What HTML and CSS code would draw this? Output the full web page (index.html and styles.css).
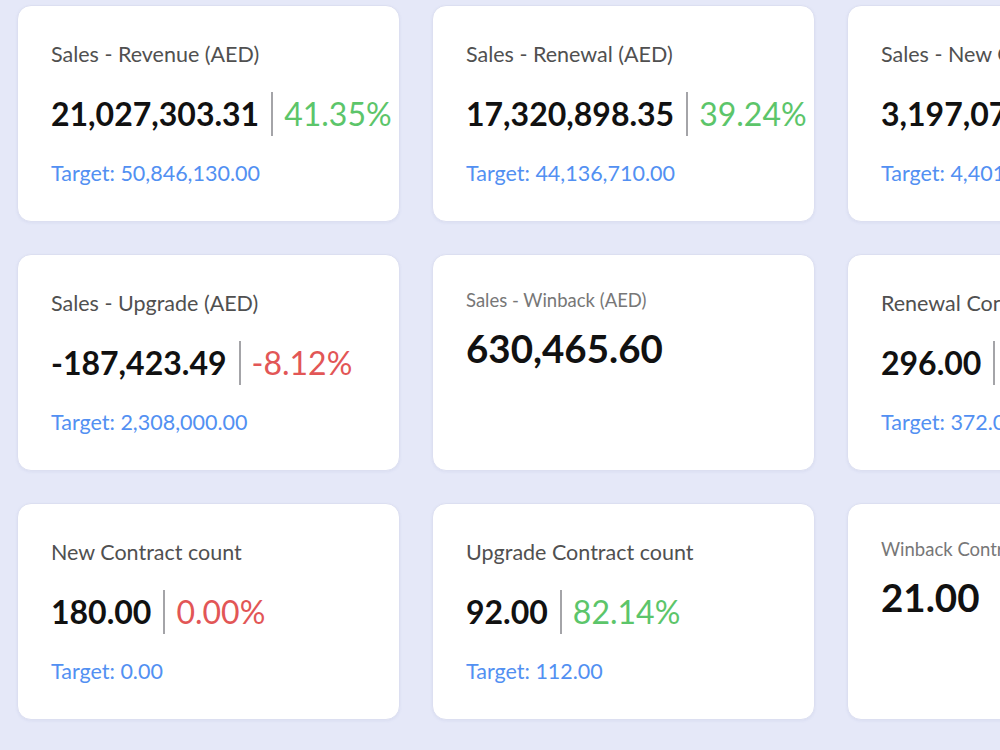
FILE: index.html
```html
<!DOCTYPE html>
<html lang="en">
<head>
    <meta charset="UTF-8">
    <meta name="viewport" content="width=device-width, initial-scale=1.0">
    <title>Sales KPIs</title>
    <link rel="stylesheet" href="styles.css">
</head>
<body>
    <div class="kpi-grid">
        <!-- Row 1: sales amounts -->
        <div class="kpi-card">
            <div class="kpi-title">Sales - Revenue (AED)</div>
            <div class="kpi-row">
                <span class="kpi-value">21,027,303.31</span>
                <span class="kpi-divider"></span>
                <span class="kpi-change up">41.35%</span>
            </div>
            <div class="kpi-target">Target: 50,846,130.00</div>
        </div>

        <div class="kpi-card">
            <div class="kpi-title">Sales - Renewal (AED)</div>
            <div class="kpi-row">
                <span class="kpi-value">17,320,898.35</span>
                <span class="kpi-divider"></span>
                <span class="kpi-change up">39.24%</span>
            </div>
            <div class="kpi-target">Target: 44,136,710.00</div>
        </div>

        <div class="kpi-card">
            <div class="kpi-title">Sales - New Contract (AED)</div>
            <div class="kpi-row">
                <span class="kpi-value">3,197,076.40</span>
                <span class="kpi-divider"></span>
                <span class="kpi-change up">72.64%</span>
            </div>
            <div class="kpi-target">Target: 4,401,420.00</div>
        </div>

        <!-- Row 2 -->
        <div class="kpi-card">
            <div class="kpi-title">Sales - Upgrade (AED)</div>
            <div class="kpi-row">
                <span class="kpi-value">-187,423.49</span>
                <span class="kpi-divider"></span>
                <span class="kpi-change down">-8.12%</span>
            </div>
            <div class="kpi-target">Target: 2,308,000.00</div>
        </div>

        <div class="kpi-card simple">
            <div class="kpi-title">Sales - Winback (AED)</div>
            <div class="kpi-value">630,465.60</div>
        </div>

        <div class="kpi-card">
            <div class="kpi-title">Renewal Contract count</div>
            <div class="kpi-row">
                <span class="kpi-value">296.00</span>
                <span class="kpi-divider"></span>
                <span class="kpi-change up">79.57%</span>
            </div>
            <div class="kpi-target">Target: 372.00</div>
        </div>

        <!-- Row 3: contract counts -->
        <div class="kpi-card">
            <div class="kpi-title">New Contract count</div>
            <div class="kpi-row">
                <span class="kpi-value">180.00</span>
                <span class="kpi-divider"></span>
                <span class="kpi-change down">0.00%</span>
            </div>
            <div class="kpi-target">Target: 0.00</div>
        </div>

        <div class="kpi-card">
            <div class="kpi-title">Upgrade Contract count</div>
            <div class="kpi-row">
                <span class="kpi-value">92.00</span>
                <span class="kpi-divider"></span>
                <span class="kpi-change up">82.14%</span>
            </div>
            <div class="kpi-target">Target: 112.00</div>
        </div>

        <div class="kpi-card simple">
            <div class="kpi-title">Winback Contract count</div>
            <div class="kpi-value">21.00</div>
        </div>
    </div>
</body>
</html>
```

FILE: styles.css
```css
* {
    margin: 0;
    padding: 0;
    box-sizing: border-box;
}

body {
    font-family: Lato, "Noto Sans", sans-serif;
    background-color: #e5e8f8;
    overflow: hidden;
    height: 750px;
}

.kpi-grid {
    display: grid;
    grid-template-columns: repeat(3, 383px);
    grid-auto-rows: 217px;
    column-gap: 32px;
    row-gap: 32px;
    padding: 5px 0 0 17px;
}

.kpi-card {
    background: #fff;
    border: 1px solid #dcdff1;
    border-radius: 14px;
    box-shadow: 0 1px 3px rgba(90, 100, 170, 0.08);
    padding: 36px 0 0 33px;
    white-space: nowrap;
    overflow: hidden;
}

.kpi-title {
    font-size: 21.5px;
    line-height: 25px;
    color: #505050;
}

.kpi-row {
    display: flex;
    align-items: center;
    margin-top: 25px;
    height: 44px;
}

.kpi-value {
    font-size: 32px;
    line-height: 44px;
    font-weight: 700;
    color: #111;
}

.kpi-divider {
    width: 2px;
    height: 44px;
    background: #a4a4a8;
    margin: 0 11px 0 12px;
}

.kpi-change {
    font-size: 32px;
    line-height: 44px;
}

.kpi-change.up { color: #5cc56a; }
.kpi-change.down { color: #e25656; }

.kpi-target {
    margin-top: 25px;
    font-size: 21.5px;
    line-height: 25px;
    color: #5290f2;
}

/* cards without a target: smaller caption, bigger figure */
.kpi-card.simple {
    padding-top: 34px;
}

.simple .kpi-title {
    font-size: 18.5px;
    line-height: 22px;
    color: #777;
}

.simple .kpi-value {
    margin-top: 14px;
    font-size: 38.5px;
    line-height: 46px;
}
```
